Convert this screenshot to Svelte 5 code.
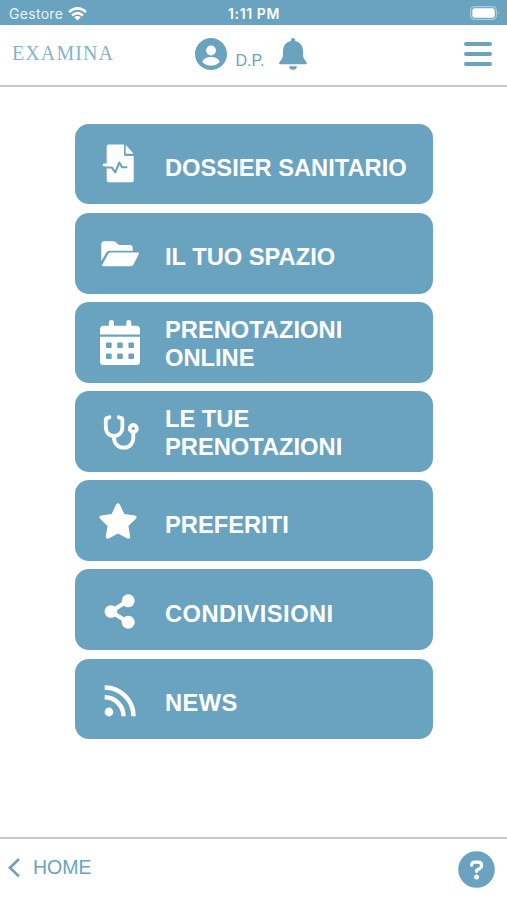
<script lang="ts">
	type IconName = 'dossier' | 'folder' | 'calendar' | 'stethoscope' | 'star' | 'share' | 'feed';

	interface MenuItem {
		icon: IconName;
		label: string;
		/** Label wraps over two lines */
		tall?: boolean;
		/** Looser tracking */
		spaced?: boolean;
	}

	const items: MenuItem[] = [
		{ icon: 'dossier', label: 'DOSSIER SANITARIO' },
		{ icon: 'folder', label: 'IL TUO SPAZIO' },
		{ icon: 'calendar', label: 'PRENOTAZIONI ONLINE', tall: true },
		{ icon: 'stethoscope', label: 'LE TUE PRENOTAZIONI', tall: true },
		{ icon: 'star', label: 'PREFERITI' },
		{ icon: 'share', label: 'CONDIVISIONI', spaced: true },
		{ icon: 'feed', label: 'NEWS', spaced: true }
	];
</script>

<div class="app">
	<div class="status-bar">
		<div class="carrier">
			<span>Gestore</span>
			<svg width="19" height="14" viewBox="0 0 19 14" aria-hidden="true">
				<g fill="none" stroke="#fff" stroke-width="2.5">
					<path d="M1 5.1Q9.500-2.400 18 5.100" />
					<path d="M4 8.500Q9.500 3.700 15 8.500" />
				</g>
				<path d="M6.200 10.200Q9.500 7.600 12.800 10.200L9.500 13.600Z" fill="#fff" />
			</svg>
		</div>
		<span class="clock">1:11 PM</span>
		<svg class="battery" width="30" height="14" viewBox="0 0 30 14" aria-hidden="true">
			<rect x=".6" y=".6" width="25.800" height="12.800" rx="4" fill="none" stroke="#a9cbdc" stroke-width="1.200" />
			<rect x="2.300" y="2.300" width="22.400" height="9.400" rx="2.500" fill="#fff" />
			<path d="M27.800 4.800Q29.600 7 27.800 9.200Z" fill="#a9cbdc" />
		</svg>
	</div>

	<header>
		<span class="logo">EXAMINA</span>
		<div class="user">
			<svg width="32" height="32" viewBox="0 0 32 32" aria-hidden="true">
				<circle cx="16" cy="16" r="16" fill="#6aa3bf" />
				<circle cx="16" cy="12.500" r="4.900" fill="#fff" />
				<path d="M7.200 23.700Q9 19 16 19T24.800 23.700Q21.200 27.600 16 27.600T7.200 23.700Z" fill="#fff" />
			</svg>
			<span class="initials">D.P.</span>
			<svg width="28" height="32" viewBox="0 0 28 32" aria-hidden="true">
				<path
					d="M14 0C15.200 0 16 .9 16 2V3.100C21 4.100 24 8 24 13V16C24 19.500 25 21.500 27.300 23.700C28.500 25 27.700 26.300 26.300 26.300H1.700C.3 26.300-.5 25 .7 23.700C3 21.500 4 19.500 4 16V13C4 8 7 4.100 12 3.100V2C12 .9 12.800 0 14 0ZM10 28.200H18C17.700 30.500 16.200 31.800 14 31.800S10.300 30.500 10 28.200Z"
					fill="#6aa3bf"
				/>
			</svg>
		</div>
		<button class="menu-toggle" aria-label="Menu">
			<span></span>
			<span></span>
			<span></span>
		</button>
	</header>

	<main>
		{#each items as item (item.icon)}
			<button class="card">
				<svg class="card-icon" viewBox="0 0 60 80" aria-hidden="true">
					{#if item.icon === 'dossier'}
						<path d="M18.700 20.600H34V30.500Q34 31.900 35.400 31.900H43.700V56.300Q43.700 58.300 41.700 58.300H18.700Q16.700 58.300 16.700 56.300V22.600Q16.700 20.600 18.700 20.600Z" />
						<path d="M35.700 20.800L43.600 29.800H35.700Z" />
						<path d="M14 39.600H24L22.500 42.300H14Q12.700 42.300 12.700 41T14 39.600Z" />
						<path class="cut" d="M16.700 43.400H21.700L25.200 48.500L29.300 38.500L32 43.200H37.300" />
					{:else if item.icon === 'folder'}
						<path d="M11.300 48V31.200Q11.300 28.200 14.300 28.200H23.500Q25 28.200 26 29.200L27.800 31.200Q28.600 32 30 32H39.700Q42.700 32 42.700 35V37.800H19.500Q17.400 37.800 16.400 39.500Z" />
						<path d="M18.200 40.900Q18.900 39.600 20.400 39.600H47.800Q49.600 39.600 48.700 41.200L43.500 51.500Q42.600 53.200 40.700 53.200H13.200Q11.500 53.200 12.400 51.500Z" />
					{:else if item.icon === 'calendar'}
						<path d="M18.900 23.700V20.200Q18.900 17.900 21.400 17.900T23.900 20.200V23.700H36.300V20.200Q36.300 17.900 38.800 17.900T41.300 20.200V23.700H46.200Q50 23.700 50 27.500V32.400H10V27.500Q10 23.700 13.800 23.700Z" />
						<path
							fill-rule="evenodd"
							d="M10 34.800H50V59.400Q50 63 46.400 63H13.600Q10 63 10 59.400ZM17 40.400H20.700Q21.700 40.400 21.700 41.400V45Q21.700 46 20.700 46H17Q16 46 16 45V41.400Q16 40.400 17 40.400ZM28.200 40.400H31.800Q32.800 40.400 32.800 41.400V45Q32.800 46 31.800 46H28.200Q27.200 46 27.200 45V41.400Q27.200 40.400 28.200 40.400ZM39.400 40.400H43Q44 40.400 44 41.400V45Q44 46 43 46H39.400Q38.400 46 38.400 45V41.400Q38.400 40.400 39.400 40.400ZM17 51.400H20.700Q21.700 51.400 21.700 52.400V56Q21.700 57 20.700 57H17Q16 57 16 56V52.400Q16 51.400 17 51.400ZM28.200 51.400H31.800Q32.800 51.400 32.800 52.400V56Q32.800 57 31.800 57H28.200Q27.200 57 27.200 56V52.400Q27.200 51.400 28.200 51.400ZM39.400 51.400H43Q44 51.400 44 52.400V56Q44 57 43 57H39.400Q38.400 57 38.400 56V52.400Q38.400 51.400 39.400 51.400Z"
						/>
					{:else if item.icon === 'stethoscope'}
						<g class="line">
							<path d="M19.500 26.300L17.500 26.800Q15.800 27.200 15.800 28.800V35.500C15.800 41.500 19 45 24 45S32.400 41.500 32.400 35.500V28.800Q32.400 27.200 30.700 26.800L28.700 26.300" />
							<path d="M24 45V46.500C24 52.500 28 56.700 33.700 56.700S43.300 52.500 43.300 46.500V41" />
							<circle cx="43.300" cy="37.500" r="3.500" />
						</g>
					{:else if item.icon === 'star'}
						<path d="M26.200 23.600Q28 21 29.800 23.600L34.400 33L44.800 34.500Q47.800 35.300 45.900 37.800L38.400 45.100L40.200 55.500Q40.300 58.600 37.300 57.500L28 52.600L18.700 57.500Q15.700 58.600 15.800 55.500L17.600 45.100L10.100 37.800Q8.200 35.300 11.200 34.500L21.600 33Z" />
					{:else if item.icon === 'share'}
						<path class="link" d="M38 30.800L20.900 41.500L38 52.200" />
						<circle cx="20.900" cy="41.500" r="6.300" />
						<circle cx="38.200" cy="30.800" r="6.500" />
						<circle cx="38.200" cy="52.200" r="6.500" />
					{:else}
						<circle cx="19" cy="53" r="4.400" />
						<path class="wave" d="M14.700 38.300A19 19 0 0 1 33.500 57.300" />
						<path class="wave" d="M14.700 28.500A28.800 28.800 0 0 1 43.500 57.300" />
					{/if}
				</svg>
				<span class="card-label" class:tall={item.tall} class:spaced={item.spaced}>{item.label}</span>
			</button>
		{/each}
	</main>

	<footer>
		<button class="home">
			<svg width="13" height="20" viewBox="0 0 13 20" aria-hidden="true">
				<path d="M12 1L3 9.700L12 18.400" fill="none" stroke="#6aa3bf" stroke-width="2.700" />
			</svg>
			<span>HOME</span>
		</button>
		<button class="help" aria-label="Aiuto">
			<svg width="37" height="37" viewBox="0 0 37 37" aria-hidden="true">
				<circle cx="18.500" cy="18.500" r="18.300" fill="#6aa3bf" />
				<path
					d="M13.600 14.100Q13.800 11.200 17 11.200H20Q23.600 11.200 23.600 14.400Q23.600 16.500 21.600 17.600L18.600 19.400V20.500"
					fill="none"
					stroke="#fff"
					stroke-width="3.200"
					stroke-linecap="round"
					stroke-linejoin="round"
				/>
				<circle cx="18.500" cy="26" r="2.500" fill="#fff" />
			</svg>
		</button>
	</footer>
</div>

<style>
	:global(body) {
		margin: 0;
		background: #fff;
	}

	.app {
		height: 900px;
		display: flex;
		flex-direction: column;
		font-family: 'Liberation Sans', Arial, sans-serif;
		color: #6aa3bf;
	}

	button {
		border: none;
		padding: 0;
		background: transparent;
		color: inherit;
		font: inherit;
		cursor: pointer;
	}

	svg {
		display: block;
		flex: none;
	}

	.status-bar {
		height: 25px;
		box-sizing: border-box;
		padding: 2px 7px 0 9px;
		display: grid;
		grid-template-columns: 1fr auto 1fr;
		align-items: center;
		background: #6aa3bf;
		color: #fff;
		font-family: Inter, sans-serif;
		font-size: 14px;
	}

	.carrier {
		display: flex;
		align-items: center;
		gap: 5px;
		color: #e9f3f8;
		letter-spacing: 0.3px;
	}

	.clock {
		margin-right: 1px;
		font-size: 14px;
		font-weight: 600;
		letter-spacing: 0.6px;
	}

	.battery {
		justify-self: end;
		margin-bottom: 1px;
	}

	header {
		height: 62px;
		box-sizing: border-box;
		padding: 0 15px 3px 12px;
		display: grid;
		grid-template-columns: 1fr auto 1fr;
		align-items: center;
		border-bottom: 2px solid #c8c8c8;
	}

	.logo {
		padding-bottom: 1px;
		font-family: 'Liberation Serif', serif;
		font-size: 20px;
		letter-spacing: 1.1px;
		color: #86b4cb;
	}

	.user {
		display: flex;
		align-items: center;
		margin-right: 2px;
	}

	.initials {
		margin: 14px 14px 0 8px;
		font-size: 16px;
		line-height: 20px;
	}

	.menu-toggle {
		width: 28px;
		justify-self: end;
		display: flex;
		flex-direction: column;
		gap: 6px;
	}

	.menu-toggle span {
		height: 4px;
		border-radius: 2px;
		background: #6aa3bf;
	}

	main {
		flex: 1;
		box-sizing: border-box;
		padding: 36.700px 74px 0 75px;
		display: flex;
		flex-direction: column;
		gap: 8.500px;
	}

	.card {
		height: 80.670px;
		flex: none;
		padding: 0 15px;
		display: flex;
		align-items: center;
		gap: 15px;
		border-radius: 14px;
		background: #6aa3bf;
		color: #fff;
		text-align: left;
	}

	.card-icon {
		width: 60px;
		height: 80px;
		fill: #fff;
	}

	.card-icon .cut {
		fill: none;
		stroke: #6aa3bf;
		stroke-width: 2;
		stroke-linejoin: round;
	}

	.card-icon .line {
		fill: none;
		stroke: #fff;
		stroke-width: 3.800;
		stroke-linecap: round;
	}

	.card-icon .link {
		fill: none;
		stroke: #fff;
		stroke-width: 4.200;
	}

	.card-icon .wave {
		fill: none;
		stroke: #fff;
		stroke-width: 4.500;
	}

	.card-label {
		padding-top: 8px;
		font-size: 23.700px;
		font-weight: 700;
		line-height: 28px;
	}

	.card-label.tall {
		padding-top: 4px;
	}

	.card-label.spaced {
		letter-spacing: 0.450px;
	}

	footer {
		height: 63px;
		box-sizing: border-box;
		padding: 0 12px 0 7px;
		display: flex;
		align-items: center;
		justify-content: space-between;
		border-top: 2px solid #c8c8c8;
	}

	.home {
		display: flex;
		align-items: center;
		gap: 13px;
		margin-bottom: 4px;
		font-size: 19.500px;
	}
</style>
